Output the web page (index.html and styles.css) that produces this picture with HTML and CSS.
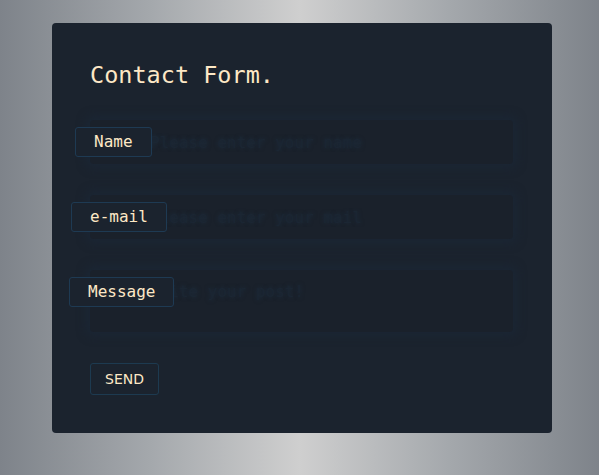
FILE: index.html
```html
<!DOCTYPE html>
<html>
<head>
<meta charset="utf-8">
<link rel="stylesheet" href="styles.css">
</head>
<body>
<div class="card">
  <h1 class="title">Contact Form.</h1>
  <form class="form">
    <div class="field">
      <input class="input" type="text" placeholder="Please enter your name">
      <label class="label label-name">Name</label>
    </div>
    <div class="field">
      <input class="input" type="text" placeholder="Please enter your mail">
      <label class="label label-mail">e-mail</label>
    </div>
    <div class="field">
      <textarea class="input textarea" placeholder="Write your post!"></textarea>
      <label class="label label-msg">Message</label>
    </div>
    <button class="send" type="button">SEND</button>
  </form>
</div>
</body>
</html>
```
FILE: styles.css
```css
html, body {
  margin: 0;
  height: 100%;
}
body {
  background: linear-gradient(90deg, #7e838a 0%, #a4a8ac 25%, #cfcfcf 50%, #a4a8ac 75%, #7e838a 100%);
  font-family: "DejaVu Sans Mono", monospace;
  padding-top: 23px;
  box-sizing: border-box;
}
.card {
  width: 500px;
  height: 410px;
  margin-left: 52px;
  background: #1b232e;
  border-radius: 4px;
  padding: 38px 38px 0 38px;
  box-sizing: border-box;
}
.title {
  margin: 0;
  font-weight: normal;
  font-size: 23.5px;
  line-height: 28px;
  color: #fde8c6;
}
.form {
  display: flex;
  flex-direction: column;
  align-items: flex-start;
  gap: 31px;
  margin-top: 31px;
}
.field {
  position: relative;
  width: 423px;
}
.input {
  display: block;
  width: 100%;
  height: 44px;
  box-sizing: border-box;
  background: #1a212b;
  border: none;
  box-shadow: 0 0 10px 4px rgba(26, 40, 56, 0.6);
  border-radius: 4px;
  padding: 0 14px 0 60px;
  font-family: "DejaVu Sans Mono", monospace;
  font-size: 16px;
  color: #1c2734;
  outline: none;
}
.input::placeholder {
  color: #1b2633;
  text-shadow: 0 0 4px rgba(30, 50, 70, 0.7);
}
.textarea {
  height: 62px;
  padding-top: 12px;
  resize: none;
}
.label {
  position: absolute;
  top: 7px;
  border: 1px solid #1e3a53;
  border-radius: 3px;
  background: #1b232e;
  padding: 0 18px;
  font-size: 16px;
  line-height: 28px;
  color: #fde8c6;
}
.label-name { left: -15px; }
.label-mail { left: -19px; }
.label-msg { left: -21px; }
.send {
  width: 69px;
  height: 32px;
  background: transparent;
  border: 1px solid #1d3a50;
  border-radius: 3px;
  font-family: "DejaVu Sans", sans-serif;
  font-size: 14px;
  color: #fde8c6;
  padding: 0;
}
```
